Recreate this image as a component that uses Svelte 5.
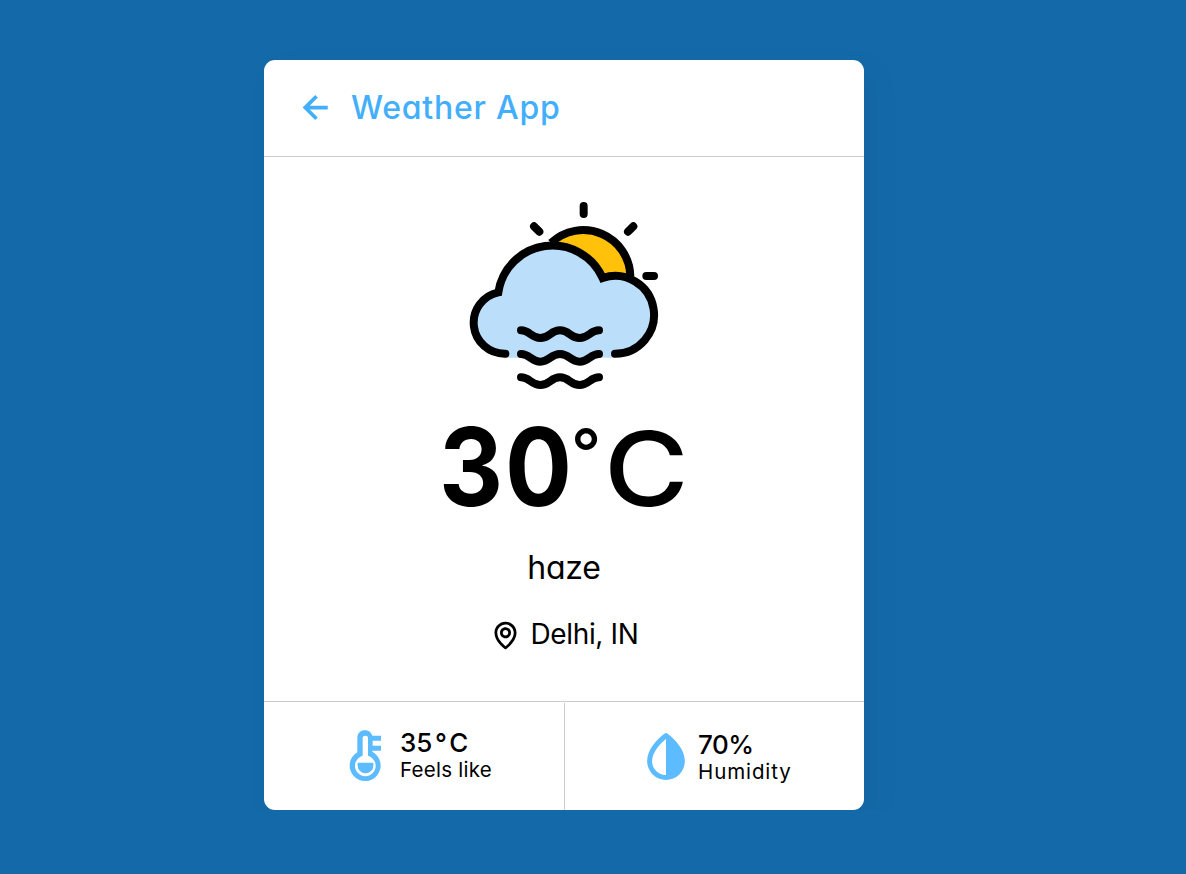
<script>
  const weather = { temp: 30, condition: 'haze', place: 'Delhi, IN', feels: 35, humidity: '70%' };
  const wave = 'c27 0 30 23 58 23s31 -23 59 -23s31 23 59 23s31 -23 58 -23';
</script>

<main class="card">
  <header>
    <svg class="back" viewBox="0 0 24 24"><path d="M12.707 17.293 8.414 13H18v-2H8.414l4.293-4.293-1.414-1.414L4.586 12l6.707 6.707z" /></svg>
    <h1>Weather App</h1>
  </header>

  <section class="now">
    <svg class="picture" viewBox="30 36 564 561">
      <path class="sun" d="M278 160A141 141 0 0 1 511 268L430 270Z" />
      <path class="cloud" d="M136 503V491A93 93 0 0 1 115 307A164.5 164.5 0 0 1 428 264A116.6 116.6 0 1 1 465 491V503Z" />
      <g class="lines">
        <path class="butt" d="M273 159A141 141 0 0 1 511 259" />
        <path d="M136 491A93 93 0 0 1 115 307A164.5 164.5 0 0 1 428 264A116.6 116.6 0 1 1 465 491" />
        <path d="M371 48V72M222 109L238 125M520 109L504 125M559 258H582" />
        <path d="M183 421{wave}M183 492{wave}M183 562{wave}" />
      </g>
    </svg>
    <div class="temp"><span class="num">{weather.temp}</span><span class="deg">°</span><span class="unit">C</span></div>
    <div class="condition">{weather.condition}</div>
    <div class="place">
      <svg viewBox="0 0 24 24"><path d="M12 14c2.206 0 4-1.794 4-4s-1.794-4-4-4-4 1.794-4 4 1.794 4 4 4zm0-6c1.103 0 2 .897 2 2s-.897 2-2 2-2-.897-2-2 .897-2 2-2z" /><path d="M11.42 21.814a.998.998 0 0 0 1.16 0C12.884 21.599 20.029 16.44 20 10c0-4.411-3.589-8-8-8S4 5.589 4 9.995c-.029 6.445 7.116 11.604 7.42 11.819zM12 4c3.309 0 6 2.691 6 6.005.021 4.438-4.388 8.423-6 9.73-1.611-1.308-6.021-5.294-6-9.735 0-3.309 2.691-6 6-6z" /></svg>
      <span>{weather.place}</span>
    </div>
  </section>

  <footer>
    <div class="cell feels">
      <svg class="thermo" viewBox="60 106 93 152">
        <path fill-rule="evenodd" d="M82 129C82 114 92 106 105 106C117 106 125 113 127 123H153V138H128V153H153V168H127V171A46.5 46.5 0 1 1 82 172ZM98 130V183A31 31 0 1 0 114 183V130Q114 123 106 123Q98 123 98 130Z" />
        <path d="M83 204H130V212A23.5 23.5 0 0 1 83 212Z" />
      </svg>
      <div class="info"><b>{weather.feels}<i>°</i>C</b><span>Feels like</span></div>
    </div>
    <div class="cell humidity">
      <svg class="drop" viewBox="51 113 114 142">
        <path fill-rule="evenodd" d="M103 115Q108 111 113 115C135 131 165 163 165 198A57 57 0 0 1 51 198C51 163 81 131 103 115ZM108 131C89 146 66 172 66 198A42 42 0 0 0 108 240Z" />
      </svg>
      <div class="info"><b>{weather.humidity}</b><span>Humidity</span></div>
    </div>
  </footer>
</main>

<style>
  :global(body) { background: #146aa9; }
  .card {
    box-sizing: border-box;
    display: flex;
    flex-direction: column;
    width: 600px;
    height: 750px;
    margin: 60px 0 0 264px;
    border-radius: 11px;
    background: #fff;
    color: #000;
    box-shadow: 10px 10px 30px rgba(0, 0, 0, 0.05);
    font-family: Inter, "Open Sans", sans-serif;
    font-feature-settings: "cv11";
  }
  svg { display: block; flex: none; overflow: visible; }
  header {
    box-sizing: border-box;
    height: 97px;
    padding: 0 30px 2px;
    border-bottom: 1px solid #ccc;
    display: flex;
    align-items: center;
    color: #43affc;
  }
  .back { width: 45px; height: 45px; fill: #43affc; }
  h1 { margin: 1px 0 0 12px; font-size: 32px; line-height: 48px; font-weight: 500; letter-spacing: 0.75px; white-space: nowrap; }
  .now { flex: 1; display: flex; flex-direction: column; align-items: center; }
  .picture { width: 188px; height: 187px; margin-top: 45px; }
  .sun { fill: #ffc10a; }
  .cloud { fill: #bbdefb; }
  .lines { fill: none; stroke: #000; stroke-width: 24; stroke-linecap: round; }
  .butt { stroke-linecap: butt; }
  .temp { display: flex; align-items: flex-start; width: 250px; height: 120px; margin-top: 18px; line-height: 120px; }
  .temp span { flex: none; transform-origin: 0 50%; }
  .num { width: 132px; font-size: 108px; font-weight: 650; letter-spacing: 2px; transform: scaleX(0.92); }
  .deg { width: 33px; margin-top: -14px; font-size: 66px; line-height: 118px; font-weight: 500; }
  .unit { width: 85px; margin-top: 2px; font-size: 103px; font-weight: 480; transform: scaleX(1.12); }
  .condition { margin-top: 17px; font-size: 32px; line-height: 47px; font-weight: 400; letter-spacing: -0.2px; }
  .place { display: flex; align-items: center; margin-top: 24px; font-size: 28px; line-height: 42px; font-weight: 400; letter-spacing: -0.35px; }
  .place svg { width: 33px; height: 33px; margin-right: 8px; }
  .place span { margin-top: -2px; }
  footer { box-sizing: border-box; display: flex; height: 109px; border-top: 1px solid #ccc; }
  .cell { box-sizing: border-box; display: flex; width: 300px; }
  .feels { padding: 28px 0 0 86px; }
  .humidity { margin-top: 1px; padding: 30px 0 0 82px; border-left: 1px solid #ccc; }
  .thermo { width: 31px; height: 51px; fill: #5dbbff; }
  .drop { width: 38px; height: 47px; fill: #5dbbff; }
  .info { display: flex; flex-direction: column; white-space: nowrap; }
  .info b { font-size: 26px; line-height: 27px; font-weight: 450; }
  .info i { margin: 0 2.5px; font-style: normal; }
  .info span { font-size: 20.5px; line-height: 28px; font-weight: 400; letter-spacing: 0.25px; }
  .feels .info { margin: -1px 0 0 19px; }
  .humidity .info { margin: -2px 0 0 13px; }
  .humidity b { letter-spacing: -0.5px; }
  .humidity .info span { letter-spacing: 0.9px; }
</style>
